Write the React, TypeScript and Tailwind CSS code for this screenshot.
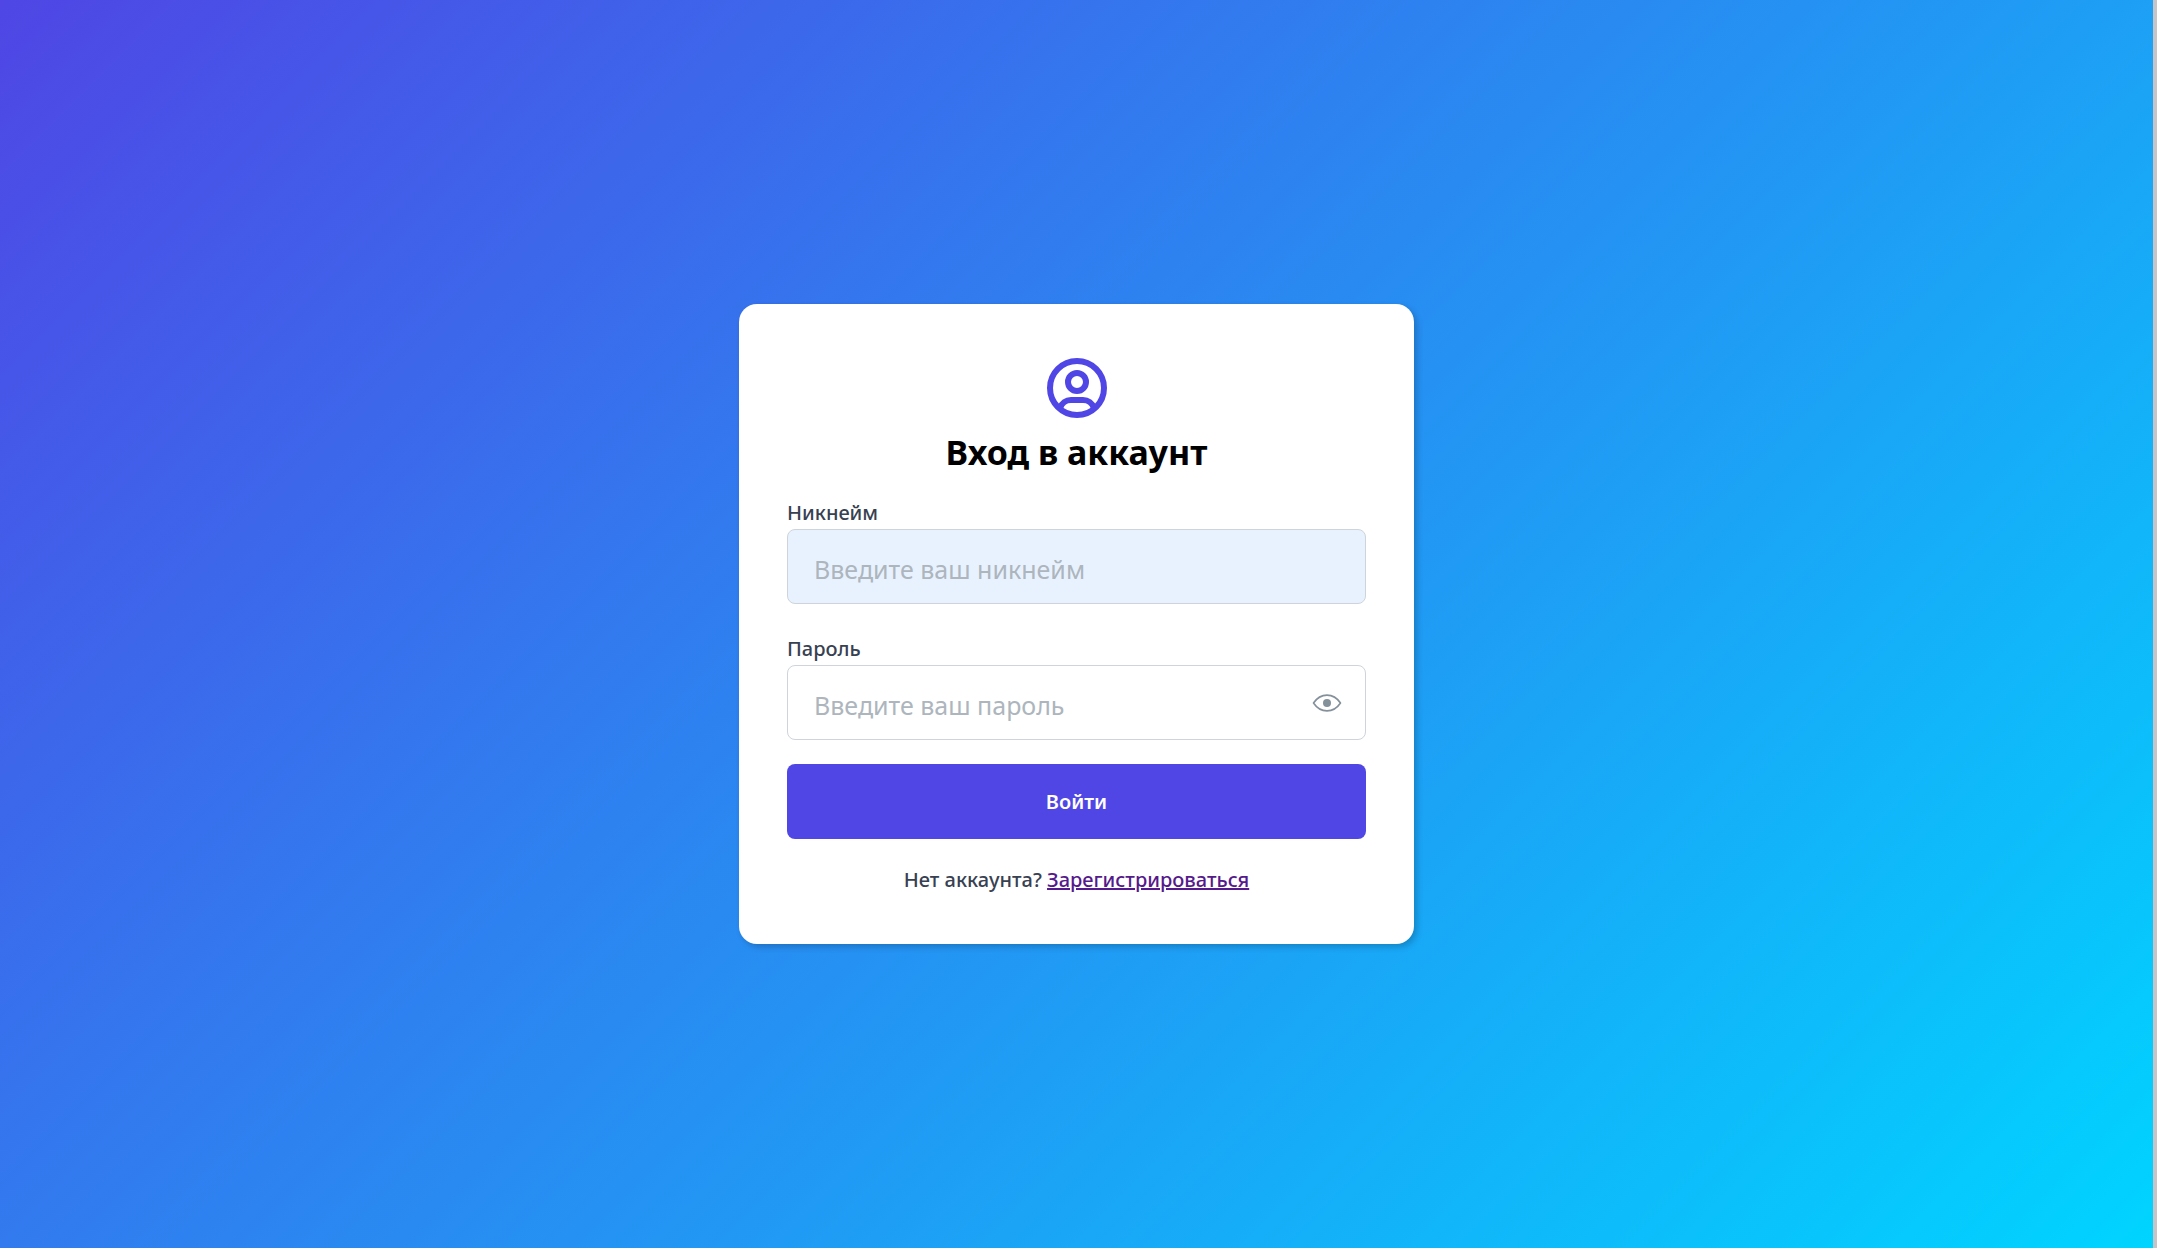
import { useState } from "react";

function UserCircleIcon() {
  return (
    <svg viewBox="0 0 24 24" fill="none" stroke="currentColor" strokeWidth="2" className="size-[72px] text-[#4f46e5]" aria-hidden="true">
      <circle cx="12" cy="12" r="9" />
      <circle cx="12" cy="10" r="3" />
      <path d="M6.4 18.6C6.9 17 8.3 16 10 16h4c1.7 0 3.1 1 3.6 2.6" />
    </svg>
  );
}

function EyeIcon() {
  return (
    <svg viewBox="0 0 30 18" fill="none" className="h-[18px] w-[30px]" aria-hidden="true">
      <path
        d="M1.5 9C5 3.8 9.6 1.1 15 1.1S25 3.8 28.5 9C25 14.2 20.4 16.9 15 16.9S5 14.2 1.5 9Z"
        stroke="currentColor"
        strokeWidth="1.6"
        strokeLinejoin="round"
      />
      <circle cx="15" cy="9" r="4" fill="currentColor" />
    </svg>
  );
}

const inputClass =
  "block w-full h-[75px] rounded-lg border border-[#ced4da] px-[26px] pt-1 text-[25px] text-gray-700 outline-none placeholder:text-[#adb5bd]";

export default function App() {
  const [visible, setVisible] = useState(false);
  return (
    <div className="flex min-h-screen items-center justify-center border-r-4 border-[#c5c5c9] bg-[linear-gradient(135deg,#4f46e5,#00d4ff)] font-['Noto_Sans','Open_Sans',sans-serif]">
      <main className="w-full max-w-[675px] rounded-[18px] bg-white p-12 shadow-[3px_3px_6px_rgba(0,0,0,0.2)]">
        <form onSubmit={(e) => e.preventDefault()}>
          <div className="flex flex-col items-center">
            <UserCircleIcon />
            <h1 className="mt-1 text-[34px] leading-[49px] font-bold text-black">Вход в аккаунт</h1>
          </div>
          <label htmlFor="nickname" className="mt-5 block text-[20px] leading-8 font-medium text-[#374151]">
            Никнейм
          </label>
          <input id="nickname" type="text" placeholder="Введите ваш никнейм" className={`${inputClass} bg-[#e8f2ff]`} />
          <label htmlFor="password" className="mt-[29px] block text-[20px] leading-8 font-medium text-[#374151]">
            Пароль
          </label>
          <div className="relative">
            <input
              id="password"
              type={visible ? "text" : "password"}
              placeholder="Введите ваш пароль"
              className={`${inputClass} bg-white pr-16`}
            />
            <button
              type="button"
              aria-label="Показать пароль"
              onClick={() => setVisible(!visible)}
              className="absolute inset-y-0 right-6 flex items-center text-[#84919b]"
            >
              <EyeIcon />
            </button>
          </div>
          <button type="submit" className="mt-6 h-[75px] w-full rounded-lg bg-[#4f46e5] text-[20px] font-semibold text-white">
            Войти
          </button>
          <p className="mt-[25px] text-center text-[20px] leading-8 font-medium text-[#374151]">
            Нет аккаунта?{" "}
            <a href="#register" className="text-[#551a8b] underline decoration-2">
              Зарегистрироваться
            </a>
          </p>
        </form>
      </main>
    </div>
  );
}
